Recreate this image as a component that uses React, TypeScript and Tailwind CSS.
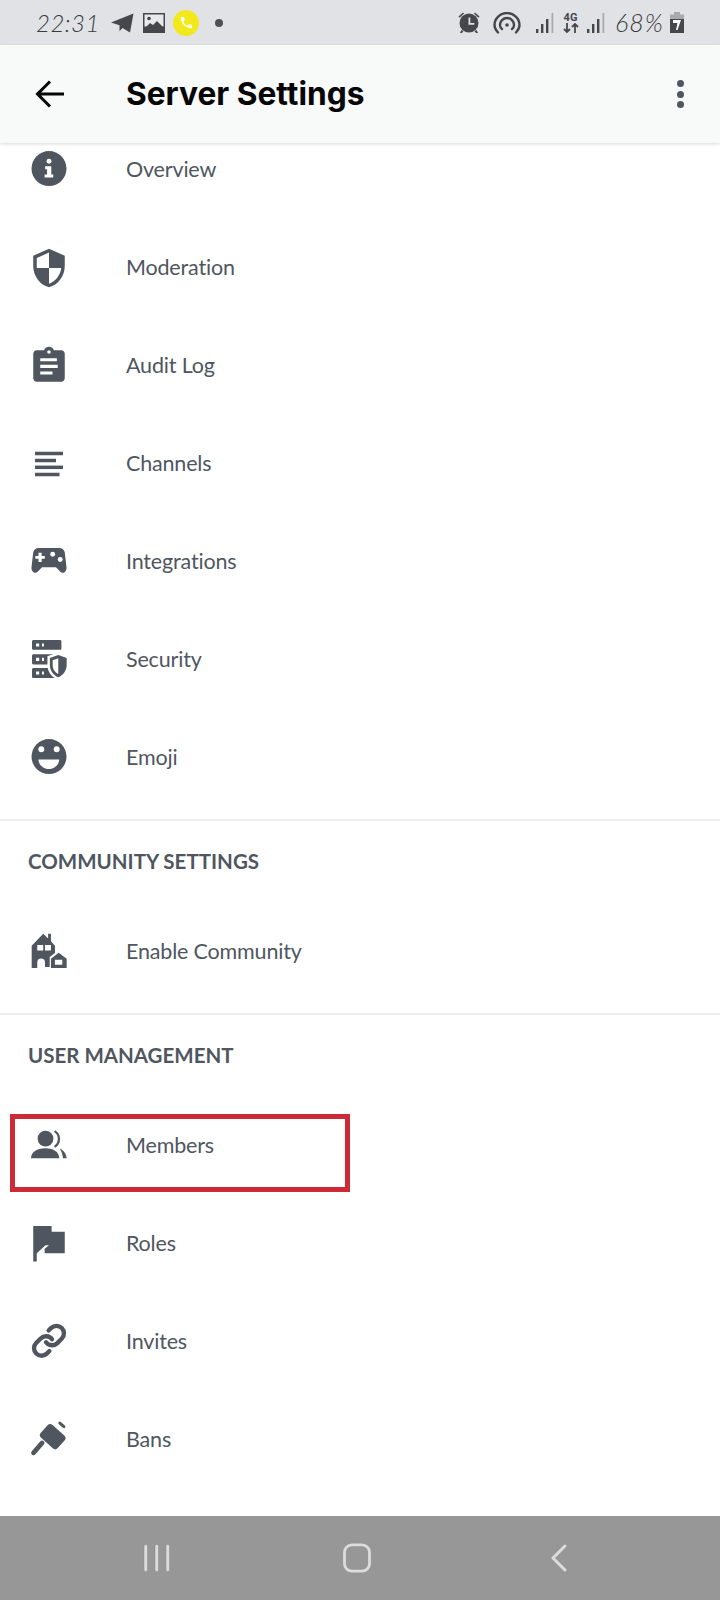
import React from "react";

const C = "#4f5660";

const Svg = ({ children }: { children: React.ReactNode }) => (
  <svg viewBox="0 0 24 24" className="h-[42px] w-[42px] shrink-0" fill={C}>
    {children}
  </svg>
);

const icons: Record<string, React.ReactNode> = {
  info: (
    <Svg>
      <circle cx="12" cy="11.200" r="10" />
      <circle cx="12" cy="7" r="1.400" fill="#fff" />
      <path d="M9.800 9.800h3.500v4.800h1.100v1.700H9.500v-1.700h1.400v-3.100H9.800z" fill="#fff" />
    </Svg>
  ),
  shield: (
    <Svg>
      <path d="M12 1L3 5v6c0 5.550 3.840 10.740 9 12 5.160-1.260 9-6.450 9-12V5l-9-4zm0 10.990h7c-.530 4.120-3.280 7.790-7 8.940V12H5V6.300l7-3.110v8.800z" />
    </Svg>
  ),
  audit: (
    <Svg>
      <path
        fillRule="evenodd"
        d="M19 3h-4.180C14.400 1.840 13.300 1 12 1c-1.300 0-2.400.840-2.820 2H5c-1.100 0-2 .900-2 2v14c0 1.100.900 2 2 2h14c1.100 0 2-.900 2-2V5c0-1.100-.900-2-2-2zm-7 0c.550 0 1 .450 1 1s-.450 1-1 1-1-.450-1-1 .450-1 1-1zM7 7.500h9.500v1.800H7zM7 11.300h10v1.800H7zM7 15.100h7v1.800H7z"
      />
    </Svg>
  ),
  channels: (
    <Svg>
      <rect x="4" y="5" width="16" height="2" />
      <rect x="4" y="9" width="12" height="2" />
      <rect x="4" y="12.900" width="16" height="2" />
      <rect x="4" y="17" width="14" height="2" />
    </Svg>
  ),
  game: (
    <Svg>
      <path d="M6 4h12c1.500 0 2.600 1 3 2.400l1 8.600c.2 1.700-.9 3.200-2.200 3.200-.9 0-1.500-.6-2-1.300L16 15H8l-1.800 1.900c-.5.700-1.100 1.300-2 1.300C2.900 18.200 1.800 16.700 2 15l1-8.600C3.400 5 4.500 4 6 4z" />
      <path d="M6 6.700h1.800v1.800h1.800v1.700H7.800V12H6v-1.800H4.200V8.500H6z" fill="#fff" />
      <circle cx="14.100" cy="7.600" r="1.400" fill="#fff" />
      <circle cx="18.400" cy="10.600" r="1.400" fill="#fff" />
    </Svg>
  ),
  security: (
    <Svg>
      <path
        fillRule="evenodd"
        d="M3.100.6h15.200c.4 0 .8.400.8.800v4c0 .4-.4.800-.8.800H3.100c-.4 0-.8-.4-.8-.8v-4c0-.4.400-.8.800-.8zM4.600 2.500v1.800h1.800V2.500zM8 2.500v1.800h1.100V2.500zM3.100 8.700h15.200c.4 0 .8.400.8.800v4.200c0 .4-.4.800-.8.800H3.100c-.4 0-.8-.4-.8-.8V9.500c0-.4.400-.8.800-.8zM4.600 10.700v1.800h1.800v-1.800zM8 10.700v1.800h1.100v-1.800zM3.100 16.500h15.200v5.800H3.100c-.4 0-.8-.4-.8-.8v-4.200c0-.4.400-.8.800-.8zM4.600 18.500v1.800h1.800v-1.800zM8 18.500v1.800h1.100v-1.800z"
      />
      <path d="M17.300 7.500l6.200 2.300v5c0 4-2.600 7.200-6.200 8.500-3.600-1.300-6.200-4.500-6.200-8.500v-5z" fill="#fff" />
      <path
        fillRule="evenodd"
        d="M17.300 9.100l4.800 1.800v3.900c0 3.200-2 5.900-4.800 7-2.800-1.100-4.800-3.800-4.800-7v-3.900zM17.300 11l-3.200 1.100v2.700c0 2.300 1.300 4.200 3.200 5.200z"
      />
    </Svg>
  ),
  emoji: (
    <Svg>
      <circle cx="12" cy="11.200" r="10" />
      <circle cx="7.600" cy="7" r="1.700" fill="#fff" />
      <circle cx="16.400" cy="7" r="1.700" fill="#fff" />
      <path d="M5.900 12.900h12c-.3 3.200-2.900 5.400-6 5.400s-5.700-2.200-6-5.400z" fill="#fff" />
    </Svg>
  ),
  community: (
    <Svg>
      <path
        fillRule="evenodd"
        d="M2.100 21.100V8.400L8.700 1.600l2.800 2.700V1.500h1.600v4.400l2.300 2.500v4.200l-3 2.200v5.800H9.700V17.900a2.200 2.200 0 0 0-4.400 0v3.200zM5.300 8v3.200h3.400V8zM9.700 8v3.200h3.400V8z"
      />
      <path fillRule="evenodd" d="M13.100 21.100v-5.300l4.400-3.400 4.600 3.400v5.300zM15.400 16.400v2.900h4.200v-2.900z" />
    </Svg>
  ),
  members: (
    <Svg>
      <circle cx="10" cy="7.800" r="4.500" />
      <path d="M1.700 19c.1-3.600 3.300-5.700 8.200-5.700s7.700 2.100 8 5.700z" />
      <path d="M15.200 3.500c3.300 2 3.300 7 0 9" fill="none" stroke={C} strokeWidth="1.300" />
      <path d="M18.200 13.400c2.200 1 3.700 3.100 3.900 5.600h-2.100c-.2-2.200-.9-4-1.800-5.600z" />
    </Svg>
  ),
  roles: (
    <Svg>
      <path d="M3 1.700h10.500V5H21v12.300H9.500v-2.600l2.500-2H10l-5 4.600v4.700H3z" />
    </Svg>
  ),
  invites: (
    <Svg>
      <g
        transform="translate(12 11.300) scale(.86) translate(-12 -12)"
        fill="none"
        stroke={C}
        strokeWidth="2.900"
        strokeLinecap="round"
        strokeLinejoin="round"
      >
        <path d="M10 13a5 5 0 0 0 7.540.54l3-3a5 5 0 0 0-7.070-7.070l-1.720 1.710" />
        <path d="M14 11a5 5 0 0 0-7.540-.54l-3 3a5 5 0 0 0 7.070 7.070l1.710-1.710" />
      </g>
    </Svg>
  ),
  bans: (
    <Svg>
      <rect x="7.600" y="5.200" width="13" height="9.800" rx="2" transform="rotate(42 14.100 10.100)" />
      <path d="M8 13.700L3.200 19.300" fill="none" stroke={C} strokeWidth="2.800" strokeLinecap="round" />
      <path d="M18.200 2.400l2.300 2" fill="none" stroke={C} strokeWidth="1.700" strokeLinecap="round" />
    </Svg>
  ),
};

const Row = ({ icon, label }: { icon: string; label: string }) => (
  <div className="flex h-[98px] items-center pl-[28px]">
    {icons[icon]}
    <span className="ml-[56px] pb-[2px] text-[21.5px] tracking-[-0.17px] text-[#4f5660]">{label}</span>
  </div>
);

const Section = ({ title }: { title: string }) => (
  <div className="flex h-[82px] items-center pb-[2px] pl-[28px] text-[20.5px] font-bold text-[#4f5660]">{title}</div>
);

const Signal = () => (
  <svg viewBox="0 0 18 20" className="h-[20px] w-[18px]" fill="#45474c">
    <rect x="0" y="16" width="2.400" height="4" />
    <rect x="5" y="11" width="2.400" height="9" />
    <rect x="10" y="6" width="2.400" height="14" />
    <rect x="15.500" y="0" width="1.800" height="20" fill="#a9aaad" />
  </svg>
);

const StatusBar = () => (
  <div className="flex h-[45px] shrink-0 items-center bg-[#e1e2e6] px-[36px] text-[#3a3c40]">
    <span className="w-[68px] text-[24px] font-light italic tracking-[0.5px]">22:31</span>
    <svg viewBox="0 0 24 20" className="ml-[6px] h-[20px] w-[24px]" fill="#45474c">
      <path d="M23.500.5L20 19.500l-7.500-4.500-3 3.200v-6L1 9.500z" />
    </svg>
    <svg viewBox="0 0 22 20" className="ml-[9px] h-[20px] w-[22px]">
      <rect width="22" height="20" fill="#45474c" />
      <rect x="1.500" y="1.500" width="19" height="12" fill="#e8e9ec" />
      <circle cx="6" cy="5.500" r="1.800" fill="#45474c" />
      <path d="M1.500 18.500v-3L7 10l3 2 4-4 6.500 6.500v4z" fill="#45474c" />
    </svg>
    <span className="relative ml-[8px] flex h-[26px] w-[26px] items-center justify-center rounded-full bg-[#f1e91b]">
      <svg viewBox="0 0 24 24" className="h-[15px] w-[15px]" fill="#fff">
        <path d="M6.600 10.800c1.400 2.800 3.800 5.100 6.600 6.600l2.200-2.200c.3-.3.700-.4 1-.2 1.100.4 2.300.6 3.600.6.600 0 1 .4 1 1V20c0 .6-.4 1-1 1C10.600 21 3 13.400 3 4c0-.6.400-1 1-1h3.500c.6 0 1 .4 1 1 0 1.300.2 2.500.6 3.600.1.300 0 .7-.2 1z" />
      </svg>
    </span>
    <span className="ml-[16px] h-[8px] w-[8px] rounded-full bg-[#4f5055]" />
    <div className="flex-1" />
    <svg viewBox="0 0 24 24" className="mr-[12px] h-[24px] w-[24px]" fill="#45474c">
      <path d="M1.500 5.500L6 1.500l1 1.200-4.500 4zM22.500 5.500L18 1.500l-1 1.200 4.500 4z" />
      <circle cx="12" cy="12" r="9.500" />
      <path d="M11.500 6.500h1.800v5.500h4v1.700h-5.800z" fill="#e1e2e6" />
      <path d="M4.500 19l-1.500 3h2l1.500-2zM19.500 19l1.500 3h-2l-1.500-2z" />
    </svg>
    <svg
      viewBox="0 0 28 22"
      className="mr-[15px] h-[22px] w-[28px]"
      fill="none"
      stroke="#45474c"
      strokeWidth="2.400"
      strokeLinecap="round"
    >
      <path d="M5 20.500C2.500 18 1.500 15.500 1.500 13a12.500 12 0 0 1 25 0c0 2.500-1 5-3.500 7.500" />
      <path d="M9 17c-1.500-1-2-2.500-2-4a7 7 0 0 1 14 0c0 1.500-.5 3-2 4" />
      <circle cx="14" cy="13" r="1.800" fill="#45474c" stroke="none" />
    </svg>
    <Signal />
    <span className="mx-[9px] flex w-[15px] flex-col items-center text-[#45474c]">
      <span className="text-[11px] font-bold leading-[11px]" style={{ fontFamily: "Roboto, sans-serif" }}>
        4G
      </span>
      <svg viewBox="0 0 16 10" className="h-[10px] w-[16px]" fill="none" stroke="#45474c" strokeWidth="1.800">
        <path d="M4 0v9M1 6l3 3 3-3M12 10V1M9 4l3-3 3 3" />
      </svg>
    </span>
    <Signal />
    <span className="ml-[10px] w-[54px] text-[25px] font-light italic leading-none tracking-[1px]">68%</span>
    <svg viewBox="0 0 14 21" className="ml-[1px] h-[21px] w-[14px]">
      <rect x="4" width="6" height="3" fill="#a9aaad" />
      <rect y="2.500" width="14" height="6" fill="#a9aaad" />
      <rect y="7" width="14" height="14" fill="#45474c" />
      <path d="M3 8h8L7.500 18H6l1.500-7H3z" fill="#fff" />
    </svg>
  </div>
);

const Header = () => (
  <div className="relative z-10 flex h-[98px] shrink-0 items-center bg-[#f8f9f9] pl-[35px] pr-[36px] shadow-[0_1px_3px_rgba(0,0,0,0.16)]">
    <svg viewBox="0 0 30 30" className="h-[30px] w-[30px]" fill="none" stroke="#060607" strokeWidth="3">
      <path d="M29 15H3M15 2.500L2.500 15 15 27.500" />
    </svg>
    <span
      className="ml-[61px] text-[31.7px] font-bold leading-none text-[#060607]"
      style={{ fontFamily: "Inter, sans-serif" }}
    >
      Server Settings
    </span>
    <div className="flex-1" />
    <div className="flex flex-col gap-[3.5px]">
      <span className="h-[7px] w-[7px] rounded-full bg-[#4f5660]" />
      <span className="h-[7px] w-[7px] rounded-full bg-[#4f5660]" />
      <span className="h-[7px] w-[7px] rounded-full bg-[#4f5660]" />
    </div>
  </div>
);

const Divider = () => <div className="h-[2px] bg-[#eeeeef]" />;

const NavBar = () => (
  <div className="flex h-[84px] shrink-0 items-center bg-[#979797] pl-[54px]">
    <div className="flex w-[202px] justify-center pl-[4px]">
      <svg viewBox="0 0 30 28" className="h-[28px] w-[30px]" fill="#dcdcdc" stroke="#8a8a8a" strokeWidth=".5">
        <rect x="2" y="0.500" width="3.500" height="27" rx="1.500" />
        <rect x="13" y="0.500" width="3.500" height="27" rx="1.500" />
        <rect x="24" y="0.500" width="3.500" height="27" rx="1.500" />
      </svg>
    </div>
    <div className="flex w-[202px] justify-center">
      <svg viewBox="0 0 30 30" className="h-[30px] w-[30px]" fill="none" stroke="#dcdcdc" strokeWidth="2.800">
        <rect x="2.500" y="1.800" width="25" height="26.400" rx="7.500" />
      </svg>
    </div>
    <div className="flex w-[202px] justify-center">
      <svg
        viewBox="0 0 18 28"
        className="h-[28px] w-[18px]"
        fill="none"
        stroke="#dcdcdc"
        strokeWidth="3"
        strokeLinecap="round"
        strokeLinejoin="round"
      >
        <path d="M15 2L3 14l12 12" />
      </svg>
    </div>
  </div>
);

export default function App() {
  return (
    <div className="flex h-[1600px] w-[720px] flex-col overflow-hidden bg-white" style={{ fontFamily: "Lato, sans-serif" }}>
      <StatusBar />
      <Header />
      <div className="flex-1 overflow-hidden">
        <div className="-mt-[22px]">
          <Row icon="info" label="Overview" />
          <Row icon="shield" label="Moderation" />
          <Row icon="audit" label="Audit Log" />
          <Row icon="channels" label="Channels" />
          <Row icon="game" label="Integrations" />
          <Row icon="security" label="Security" />
          <Row icon="emoji" label="Emoji" />
          <div className="h-[12px]" />
          <Divider />
          <Section title="COMMUNITY SETTINGS" />
          <Row icon="community" label="Enable Community" />
          <div className="h-[12px]" />
          <Divider />
          <Section title="USER MANAGEMENT" />
          <div className="relative">
            <Row icon="members" label="Members" />
            <div className="absolute left-[10px] top-[17px] h-[78px] w-[340px] border-[5px] border-[#cc2a36]" />
          </div>
          <Row icon="roles" label="Roles" />
          <Row icon="invites" label="Invites" />
          <Row icon="bans" label="Bans" />
        </div>
      </div>
      <NavBar />
    </div>
  );
}
